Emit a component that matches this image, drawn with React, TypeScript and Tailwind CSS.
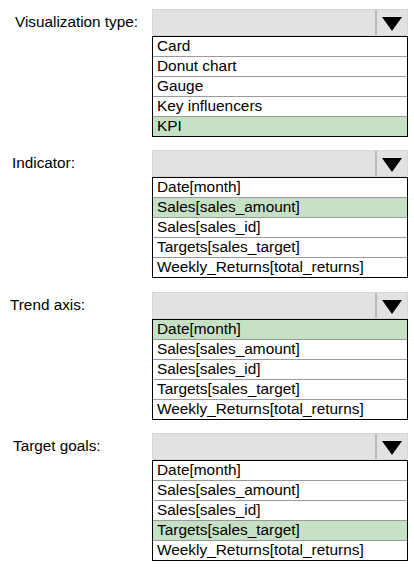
import React from 'react';

type Field = {
  label: string;
  labelPad: string;
  options: string[];
  selected: number;
};

const columns = [
  'Date[month]',
  'Sales[sales_amount]',
  'Sales[sales_id]',
  'Targets[sales_target]',
  'Weekly_Returns[total_returns]',
];

const fields: Field[] = [
  {
    label: 'Visualization type:',
    labelPad: 'pl-[15px]',
    options: ['Card', 'Donut chart', 'Gauge', 'Key influencers', 'KPI'],
    selected: 4,
  },
  { label: 'Indicator:', labelPad: 'pl-[12px]', options: columns, selected: 1 },
  { label: 'Trend axis:', labelPad: 'pl-[10px]', options: columns, selected: 0 },
  { label: 'Target goals:', labelPad: 'pl-[13px]', options: columns, selected: 3 },
];

const Dropdown: React.FC<{ options: string[]; selected: number }> = ({ options, selected }) => (
  <div className="w-[256px]">
    {/* Closed select box */}
    <div className="flex h-[27px] border border-[#d6d6d6] bg-[#e2e2e2]">
      <div className="flex-1" />
      <div className="flex w-[32px] items-center justify-center border-l-2 border-[#b9b9b9]">
        <svg width="20" height="14" viewBox="0 0 20 14" className="mt-[2px]">
          <polygon points="0,0 20,0 10,14" fill="#000" />
        </svg>
      </div>
    </div>

    {/* Option list */}
    <div className="border border-black bg-white">
      {options.map((opt, i) => (
        <div
          key={opt}
          className={`pl-[4px] text-[15.4px] leading-[17px] text-black ${
            i > 0 ? 'h-[20px] border-t border-[#9a9a9a]' : 'h-[19px]'
          } ${i === selected ? 'bg-[#c5e0c4]' : ''}`}
        >
          {opt}
        </div>
      ))}
    </div>
  </div>
);

const App: React.FC = () => {
  return (
    <div
      className="flex min-h-[568px] w-[414px] flex-col gap-[13px] bg-white pt-[9px]"
      style={{ fontFamily: '"Liberation Sans", Arial, sans-serif' }}
    >
      {fields.map((f, i) => (
        <div key={f.label} className={`flex ${i === 2 ? 'mt-[1px]' : ''}`}>
          <div className={`w-[152px] ${f.labelPad}`}>
            <div className="flex h-[27px] items-center text-[15.3px] text-black">{f.label}</div>
          </div>
          <Dropdown options={f.options} selected={f.selected} />
        </div>
      ))}
    </div>
  );
};

export default App;
